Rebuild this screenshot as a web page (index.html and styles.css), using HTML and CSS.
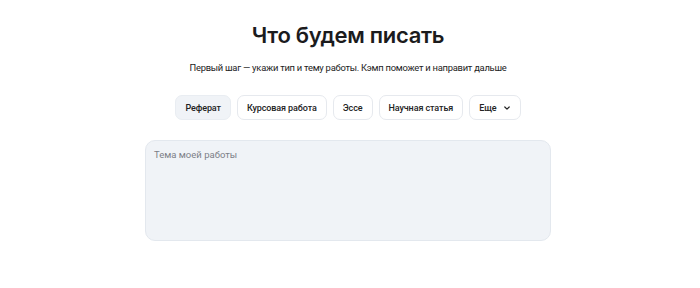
FILE: index.html
```html
<!DOCTYPE html>
<html lang="ru">
<head>
<meta charset="utf-8">
<link rel="stylesheet" href="styles.css">
</head>
<body>
<main class="page">
  <h1 class="title">Что будем писать</h1>
  <p class="subtitle">Первый шаг — укажи тип и тему работы. Кэмп поможет и направит дальше</p>
  <div class="chips">
    <button class="chip chip-active">Реферат</button>
    <button class="chip">Курсовая работа</button>
    <button class="chip">Эссе</button>
    <button class="chip">Научная статья</button>
    <button class="chip chip-more">Еще
      <svg class="chev" width="8" height="8" viewBox="0 0 8 8"><path d="M1.8 3 L4 5.1 L6.2 3" fill="none" stroke="#222" stroke-width="1.2" stroke-linecap="round" stroke-linejoin="round"/></svg>
    </button>
  </div>
  <div class="topic">
    <textarea class="topic-input" placeholder="Тема моей работы"></textarea>
  </div>
</main>
</body>
</html>
```

FILE: styles.css
```css
* { box-sizing: border-box; }
html, body { margin: 0; padding: 0; background: #fff; }
body { font-family: Roboto, "Noto Sans", sans-serif; color: #1d1d1f; }
.page {
  display: flex;
  flex-direction: column;
  align-items: center;
  padding: 20px 4px 0 0;
}
.title {
  margin: 0;
  font-family: Inter, "Noto Sans", sans-serif;
  font-size: 22px;
  font-weight: 600;
  line-height: 30px;
  letter-spacing: -0.3px;
  color: #1b1b1d;
}
.subtitle {
  margin: 11px 0 0;
  font-size: 9.4px;
  line-height: 14px;
  letter-spacing: -0.25px;
  color: #222;
}
.chips {
  display: flex;
  gap: 6px;
  margin-top: 20px;
}
.chip {
  height: 25px;
  padding: 0 9px;
  border: 1px solid #e6e9ee;
  border-radius: 7px;
  background: #fff;
  font-family: inherit;
  font-size: 9px;
  font-weight: 500;
  letter-spacing: -0.1px;
  color: #222;
  display: flex;
  align-items: center;
  gap: 6px;
}
.chip-active { background: #f0f3f7; border-color: #e9edf2; }
.chip-more { padding-right: 9px; }
.chev { display: block; }
.topic {
  margin-top: 20px;
  width: 406px;
  height: 101px;
  border: 1px solid #e3e8ee;
  border-radius: 10px;
  background: #f0f3f7;
}
.topic-input {
  display: block;
  width: 100%;
  height: 100%;
  resize: none;
  border: none;
  outline: none;
  background: transparent;
  padding: 8px 8px;
  font-family: inherit;
  font-size: 9.5px;
  color: #222;
}
.topic-input::placeholder { color: #7c8087; }
```
